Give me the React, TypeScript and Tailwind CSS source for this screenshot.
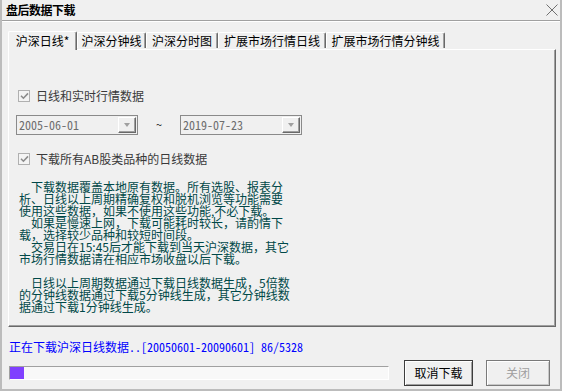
const tabs = [
  { label: "沪深日线*", w: "w-[69px]", active: true },
  { label: "沪深分钟线", w: "w-[69px]", active: false },
  { label: "沪深分时图", w: "w-[72px]", active: false },
  { label: "扩展市场行情日线", w: "w-[108px]", active: false },
  { label: "扩展市场行情分钟线", w: "w-[119px]", active: false },
];

const lines = [
  "　下载数据覆盖本地原有数据。所有选股、报表分",
  "析、日线以上周期精确复权和脱机浏览等功能需要",
  "使用这些数据，如果不使用这些功能,不必下载。",
  "　如果是慢速上网，下载可能耗时较长，请酌情下",
  "载，选择较少品种和较短时间段。",
  "　交易日在15:45后才能下载到当天沪深数据，其它",
  "市场行情数据请在相应市场收盘以后下载。",
  "",
  "　日线以上周期数据通过下载日线数据生成，5倍数",
  "的分钟线数据通过下载5分钟线生成，其它分钟线数",
  "据通过下载1分钟线生成。",
];

function CheckBox({ label }: { label: string }) {
  return (
    <div className="flex items-center h-[14px] ml-[2px]">
      <span className="w-[12px] h-[12px] border border-[#b0b0b0] bg-[#f4f4f4] flex items-center justify-center">
        <svg width="9" height="8" viewBox="0 0 9 8">
          <path d="M1 3.8 L3.4 6.2 L8 1.4" stroke="#8c8c8c" strokeWidth="1.6" fill="none" />
        </svg>
      </span>
      <span className="ml-[6px] text-[12px] leading-[14px] text-[#3a3a3a]">{label}</span>
    </div>
  );
}

function DateBox({ value }: { value: string }) {
  return (
    <div className="w-[122px] h-[20px] border border-[#8a8a8a] bg-[#f0f0f0] flex items-center justify-between pl-[2px] pr-px">
      <span className="text-[12px] leading-[14px] text-[#6d6d6d] [font-feature-settings:'hwid']">{value}</span>
      <span className="w-[18px] h-[16px] border-t border-l border-white border-r border-b border-r-[#696969] border-b-[#696969] shadow-[inset_-1px_-1px_0_#a0a0a0] flex items-center justify-center">
        <span className="w-0 h-0 border-x-[3px] border-t-[4px] border-x-transparent border-t-[#a0a0a0]" />
      </span>
    </div>
  );
}

export default function App() {
  return (
    <div className="w-[562px] h-[391px] bg-[#f0f0f0] border-x-2 border-b-2 border-[#bcbcbc] flex flex-col font-['Noto_Sans_CJK_SC',sans-serif] text-black overflow-hidden">
      {/* title bar */}
      <div className="h-[21px] flex items-center justify-between pl-[4px] pr-[2px] border-b border-[#a0a0a0] shadow-[0_1px_0_#fff]">
        <span className="text-[12px] font-bold leading-[14px] tracking-[-0.5px]">盘后数据下载</span>
        <svg width="12" height="12" viewBox="0 0 12 12">
          <path d="M0.5 0.5 L11.5 11.5 M11.5 0.5 L0.5 11.5" stroke="#707070" strokeWidth="1" fill="none" />
        </svg>
      </div>

      {/* tabs */}
      <div className="mt-[10px] ml-[6px] h-[18px] flex items-end relative z-10">
        {tabs.map((t) =>
          t.active ? (
            <div
              key={t.label}
              className={`${t.w} h-[19px] -mb-px bg-[#f0f0f0] border-t border-l border-white border-r border-r-[#696969] shadow-[inset_-1px_0_0_#a0a0a0] rounded-t-[2px] flex items-center justify-center text-[12px] leading-[14px]`}
            >
              {t.label}
            </div>
          ) : (
            <div
              key={t.label}
              className={`${t.w} h-[16px] mb-px bg-[#f0f0f0] border-t border-l border-white border-r border-r-[#696969] shadow-[inset_-1px_0_0_#a0a0a0] rounded-t-[2px] flex items-center justify-center text-[12px] leading-[14px]`}
            >
              {t.label}
            </div>
          )
        )}
      </div>

      {/* panel */}
      <div className="ml-[6px] w-[548px] h-[278px] border-t border-l border-white border-r border-b border-r-[#696969] border-b-[#696969] shadow-[inset_-1px_-1px_0_#a0a0a0] pl-[7px] pt-[39px] flex flex-col">
        <CheckBox label="日线和实时行情数据" />
        <div className="mt-[12px] flex items-center">
          <DateBox value="2005-06-01" />
          <span className="w-[42px] text-center text-[11px] leading-[14px] text-[#222] -translate-y-px">~</span>
          <DateBox value="2019-07-23" />
        </div>
        <div className="mt-[17px]">
          <CheckBox label="下载所有AB股类品种的日线数据" />
        </div>
        <div className="mt-[15px] ml-[3px] text-[12px] leading-[12px] text-[#004848] whitespace-pre">
          {lines.map((l, i) => (
            <div key={i} className="h-[12px]">
              {l}
            </div>
          ))}
        </div>
      </div>

      {/* status */}
      <div className="ml-[7px] mt-[13px] h-[14px] text-[12px] leading-[14px] text-[#0000ff] whitespace-pre [font-feature-settings:'hwid']">
        正在下载沪深日线数据..[20050601-20090601] 86/5328
      </div>

      {/* bottom row */}
      <div className="ml-[7px] mt-[6px] h-[26px] flex items-center">
        <div className="w-[380px] h-[14px] border-t border-l border-[#a0a0a0] border-b border-r border-b-white border-r-white bg-[#f8f8f8] flex">
          <div className="w-[14px] h-full bg-[#8040ff]" />
        </div>
        <button className="ml-[15px] w-[69px] h-[26px] border border-[#3c3c3c] bg-[#f0f0f0] shadow-[inset_1px_1px_0_#fff,inset_-1px_-1px_0_#a0a0a0] text-[12px] leading-[14px] text-black">
          取消下载
        </button>
        <button className="ml-[13px] w-[64px] h-[26px] border border-[#7a7a7a] bg-[#f0f0f0] shadow-[inset_1px_1px_0_#fff,inset_-1px_-1px_0_#c8c8c8] text-[12px] leading-[14px] text-[#a0a0a0]">
          关闭
        </button>
      </div>
    </div>
  );
}
